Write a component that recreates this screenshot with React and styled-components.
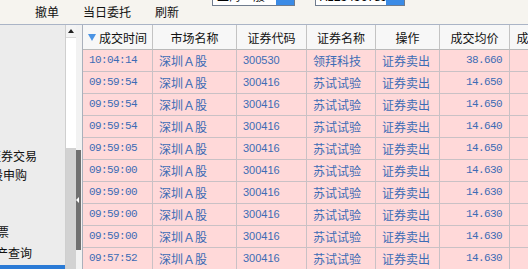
import React from "react";
import styled, { createGlobalStyle } from "styled-components";

const GlobalStyle = createGlobalStyle`
  html, body {
    margin: 0;
    padding: 0;
    overflow: hidden;
    background: #f5f3ee;
  }
`;

const columns = [
  { title: "成交时间", width: 70, sorted: true },
  { title: "市场名称", width: 84 },
  { title: "证券代码", width: 70 },
  { title: "证券名称", width: 69 },
  { title: "操作", width: 64 },
  { title: "成交均价", width: 70 },
  { title: "成交数量", width: 62 },
];

const trades = [
  ["10:04:14", "300530", "领拜科技", "38.660", "100"],
  ["09:59:54", "300416", "苏试试验", "14.650", "200"],
  ["09:59:54", "300416", "苏试试验", "14.650", "100"],
  ["09:59:54", "300416", "苏试试验", "14.640", "300"],
  ["09:59:05", "300416", "苏试试验", "14.650", "100"],
  ["09:59:00", "300416", "苏试试验", "14.630", "100"],
  ["09:59:00", "300416", "苏试试验", "14.630", "200"],
  ["09:59:00", "300416", "苏试试验", "14.630", "100"],
  ["09:59:00", "300416", "苏试试验", "14.630", "100"],
  ["09:57:52", "300416", "苏试试验", "14.630", "500"],
];

const treeItems = [
  { label: "证券交易", indent: 29, height: 19 },
  { label: "新股申购", indent: 19, height: 19 },
  { label: "", indent: 19, height: 19 },
  { label: "", indent: 19, height: 19 },
  { label: "股票", indent: 25, height: 19 },
  { label: "资产查询", indent: 24, height: 24 },
  { label: "当日成交", indent: 19, height: 19, selected: true },
];

const App = () => {
  return (
    <Page>
      <GlobalStyle />
      <Toolbar>
        <ButtonGroup>
          <ToolButton>撤单</ToolButton>
          <ToolButton>当日委托</ToolButton>
          <ToolButton>刷新</ToolButton>
        </ButtonGroup>
        <ComboGroup>
          <Combo width={83}>
            <ComboText>上海一般</ComboText>
            <ComboButton />
          </Combo>
          <Combo width={90}>
            <ComboText>A123456789</ComboText>
            <ComboButton />
          </Combo>
        </ComboGroup>
      </Toolbar>

      <Body>
        <LeftPanel>
          <Tree>
            {treeItems.map((item, i) => (
              <TreeItem
                key={i}
                indent={item.indent}
                h={item.height}
                selected={item.selected}
              >
                {item.label}
              </TreeItem>
            ))}
          </Tree>
        </LeftPanel>

        <VScroll>
          <UpButton>
            <UpArrow />
          </UpButton>
          <Track />
          <Thumb />
        </VScroll>

        <Splitter>
          <SplitHandle>
            <HandleArrow />
          </SplitHandle>
        </Splitter>

        <TableWrap>
          <Grid cols={columns.map((c) => c.width + "px").join(" ")}>
            {columns.map((c) => (
              <HeadCell key={c.title}>
                {c.sorted && <SortArrow />}
                {c.title}
              </HeadCell>
            ))}
            {trades.map((t, i) => (
              <React.Fragment key={i}>
                <Cell mono>{t[0]}</Cell>
                <Cell>深圳Ａ股</Cell>
                <Cell code>{t[1]}</Cell>
                <Cell>{t[2]}</Cell>
                <Cell>证券卖出</Cell>
                <Cell mono right>
                  {t[3]}
                </Cell>
                <Cell mono right>
                  {t[4]}
                </Cell>
              </React.Fragment>
            ))}
          </Grid>
        </TableWrap>
      </Body>
    </Page>
  );
};

export default App;

const Page = styled.div`
  width: 528px;
  height: 269px;
  display: flex;
  flex-direction: column;
  overflow: hidden;
  background: #f5f3ee;
  font-family: "Noto Sans CJK SC", "Liberation Sans", sans-serif;
  font-size: 12px;
`;

const Toolbar = styled.div`
  height: 24px;
  flex: none;
  display: flex;
  align-items: flex-start;
  border-bottom: 1px solid #aab4c6;
  background: #f6f4ef;
`;

const ButtonGroup = styled.div`
  display: flex;
  gap: 24px;
  padding-left: 35px;
`;

const ToolButton = styled.div`
  line-height: 23px;
  color: #111;
  cursor: default;
`;

const ComboGroup = styled.div`
  display: flex;
  gap: 20px;
  margin-left: 33px;
`;

const Combo = styled.div`
  width: ${(p) => p.width}px;
  height: 6px;
  box-sizing: border-box;
  display: flex;
  align-items: flex-end;
  overflow: hidden;
  background: #fff;
  border: 1px solid #6f7c8e;
  border-top: none;
`;

const ComboText = styled.div`
  flex: 1;
  line-height: 18px;
  padding-left: 4px;
  color: #000;
  white-space: nowrap;
  overflow: hidden;
`;

const ComboButton = styled.div`
  width: 18px;
  align-self: stretch;
  background: #3b8be6;
`;

const Body = styled.div`
  flex: 1;
  min-height: 0;
  display: flex;
`;

const LeftPanel = styled.div`
  width: 65px;
  flex: none;
  overflow: hidden;
  background: #ececec;
`;

const Tree = styled.div`
  margin-left: -40px;
  padding-top: 121px;
`;

const TreeItem = styled.div`
  height: ${(p) => p.h}px;
  line-height: ${(p) => p.h}px;
  padding-left: ${(p) => p.indent}px;
  white-space: nowrap;
  color: ${(p) => (p.selected ? "#fff" : "#111")};
  background: ${(p) => (p.selected ? "#2b7bd6" : "transparent")};
`;

const VScroll = styled.div`
  width: 11px;
  flex: none;
  display: flex;
  flex-direction: column;
  background: #fff;
  border-left: 1px solid #cfcfcf;
  box-sizing: border-box;
`;

const UpButton = styled.div`
  height: 12px;
  display: flex;
  align-items: center;
  justify-content: center;
  background: #f4f4f4;
  border-bottom: 1px solid #dadada;
`;

const UpArrow = styled.div`
  width: 0;
  height: 0;
  border-left: 3px solid transparent;
  border-right: 3px solid transparent;
  border-bottom: 4px solid #222;
`;

const Track = styled.div`
  flex: 1;
  background: #fff;
`;

const Thumb = styled.div`
  height: 121px;
  background: #d2d2d2;
`;

const Splitter = styled.div`
  width: 6px;
  flex: none;
  padding-top: 125px;
  background: #f2f2f2;
`;

const SplitHandle = styled.div`
  width: 5px;
  height: 100px;
  display: flex;
  align-items: center;
  justify-content: flex-start;
  background: #707070;
`;

const HandleArrow = styled.div`
  width: 0;
  height: 0;
  border-top: 3px solid transparent;
  border-bottom: 3px solid transparent;
  border-right: 3px solid #fff;
`;

const TableWrap = styled.div`
  flex: 1;
  min-width: 0;
  overflow: hidden;
  background: #fff;
  border-left: 1px solid #aab0bb;
`;

const Grid = styled.div`
  display: grid;
  grid-template-columns: ${(p) => p.cols};
  grid-template-rows: 25px;
  grid-auto-rows: 22px;
  width: max-content;
`;

const HeadCell = styled.div`
  display: flex;
  align-items: center;
  justify-content: center;
  gap: 3px;
  box-sizing: border-box;
  background: #f7f7f7;
  border-right: 1px solid #c3c3c3;
  border-bottom: 1px solid #b9b9b9;
  color: #111;
  white-space: nowrap;
`;

const SortArrow = styled.span`
  width: 0;
  height: 0;
  border-left: 4px solid transparent;
  border-right: 4px solid transparent;
  border-top: 7px solid #4a93e4;
`;

const Cell = styled.div`
  box-sizing: border-box;
  padding: 0 ${(p) => (p.right ? "7px" : "6px")};
  line-height: 21px;
  text-align: ${(p) => (p.right ? "right" : "left")};
  white-space: nowrap;
  overflow: hidden;
  background: #ffd9d9;
  color: #3d6cb5;
  border-right: 1px solid #c9c1c5;
  border-bottom: 1px solid #c9c1c5;
  font-family: ${(p) =>
    p.mono
      ? '"Liberation Mono", monospace'
      : p.code
      ? '"Liberation Sans", sans-serif'
      : '"Noto Sans CJK SC", sans-serif'};
  font-size: ${(p) => (p.mono || p.code ? "11px" : "12px")};
  letter-spacing: ${(p) => (p.mono ? "-0.6px" : "0")};
`;
